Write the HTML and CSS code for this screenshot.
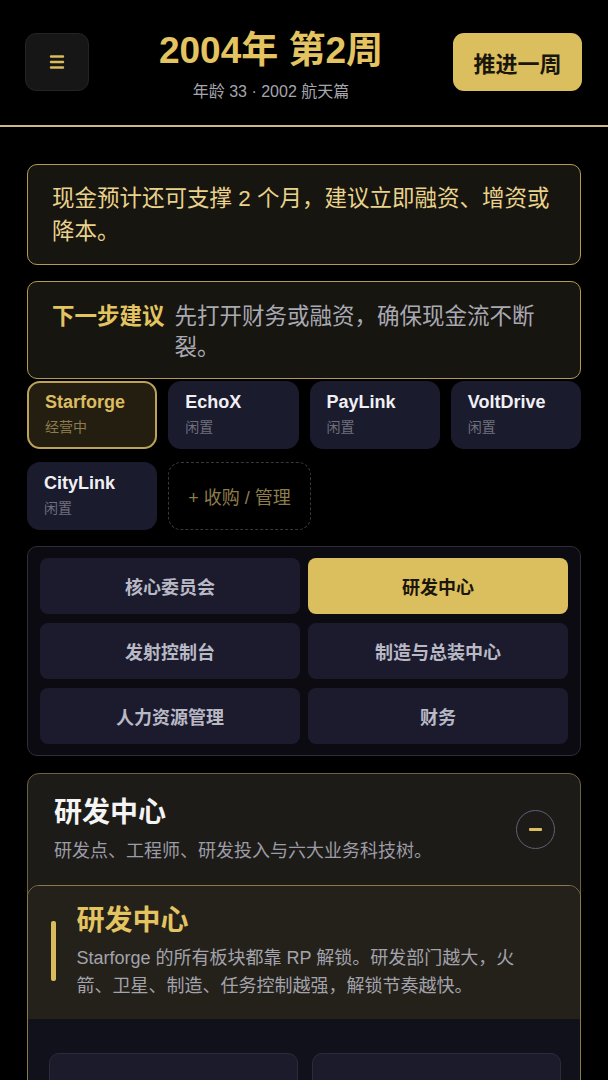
FILE: index.html
```html
<!DOCTYPE html>
<html lang="zh-CN">
<head>
<meta charset="utf-8">
<link rel="stylesheet" href="styles.css">
</head>
<body>
<div class="page">
  <header class="topbar">
    <button class="menu-btn" aria-label="菜单">
      <svg width="16" height="16" viewBox="0 0 16 16"><path d="M2 2.5h12M2 8h12M2 13.5h12" stroke="#d9bc5c" stroke-width="2.4" stroke-linecap="round"/></svg>
    </button>
    <div class="title-block">
      <div class="title">2004年 第2周</div>
      <div class="subtitle">年龄 33 · 2002 航天篇</div>
    </div>
    <button class="advance-btn">推进一周</button>
  </header>

  <main class="content">
    <div class="alert">现金预计还可支撑 2 个月，建议立即融资、增资或降本。</div>

    <div class="alert next">
      <span class="next-label">下一步建议</span>
      <span class="next-text">先打开财务或融资，确保现金流不断裂。</span>
    </div>

    <div class="companies">
      <div class="chip active"><div class="chip-name">Starforge</div><div class="chip-status">经营中</div></div>
      <div class="chip"><div class="chip-name">EchoX</div><div class="chip-status">闲置</div></div>
      <div class="chip"><div class="chip-name">PayLink</div><div class="chip-status">闲置</div></div>
      <div class="chip"><div class="chip-name">VoltDrive</div><div class="chip-status">闲置</div></div>
      <div class="chip"><div class="chip-name">CityLink</div><div class="chip-status">闲置</div></div>
      <div class="chip add">+ 收购 / 管理</div>
    </div>

    <nav class="tabs">
      <div class="tab">核心委员会</div>
      <div class="tab active">研发中心</div>
      <div class="tab">发射控制台</div>
      <div class="tab">制造与总装中心</div>
      <div class="tab">人力资源管理</div>
      <div class="tab">财务</div>
    </nav>

    <section class="section">
      <div class="section-head">
        <div>
          <div class="section-title">研发中心</div>
          <div class="section-sub">研发点、工程师、研发投入与六大业务科技树。</div>
        </div>
        <button class="collapse-btn" aria-label="收起"><span></span></button>
      </div>
      <div class="inner">
        <div class="inner-intro">
          <div class="bar"></div>
          <div>
            <div class="inner-title">研发中心</div>
            <div class="inner-text">Starforge 的所有板块都靠 RP 解锁。研发部门越大，火箭、卫星、制造、任务控制越强，解锁节奏越快。</div>
          </div>
        </div>
        <div class="inner-body">
          <div class="stat-card"><div class="stat-label">研发点</div></div>
          <div class="stat-card"><div class="stat-label">工程师</div></div>
        </div>
      </div>
    </section>
  </main>
</div>
</body>
</html>
```
FILE: styles.css
```css
* { box-sizing: border-box; }
html, body { margin: 0; padding: 0; background: #000; }
body {
  font-family: "Liberation Sans", "Noto Sans CJK SC", sans-serif;
  color: #e8e8ee;
  height: 1080px;
  overflow: hidden;
}
.page { width: 608px; }

.topbar {
  height: 127px;
  padding: 33px 26px 0 25px;
  display: flex;
  align-items: flex-start;
  justify-content: space-between;
  border-bottom: 2px solid #cdb97e;
}
.menu-btn {
  width: 64px; height: 58px;
  border-radius: 11px;
  background: #161616;
  border: 1px solid #242424;
  display: flex; align-items: center; justify-content: center;
  padding: 0;
}
.title-block {
  text-align: center;
  display: flex; flex-direction: column; align-items: center;
  margin-top: -3px;
}
.title {
  font-size: 37px; font-weight: 700; color: #e3c460;
  line-height: 42px;
}
.subtitle { font-size: 16px; color: #a6a6ae; line-height: 20px; margin-top: 10px; }
.advance-btn {
  width: 129px; height: 58px;
  border: none; border-radius: 11px;
  background: #dbbe5e;
  color: #1a160c;
  font-family: "Liberation Sans", "Noto Sans CJK SC", sans-serif;
  font-size: 22px; font-weight: 700;
  padding: 0;
}

.content { padding: 37px 27px 0 27px; }

.alert {
  border: 1.5px solid #b09a55;
  background: #17150f;
  border-radius: 10px;
  padding: 17px 24px 16px;
  font-size: 22.5px;
  line-height: 33px;
  color: #e9d28c;
}
.alert.next {
  margin-top: 16px;
  display: flex;
  gap: 10px;
  padding: 19px 24px 15px;
  line-height: 31px;
}
.next-label { font-weight: 700; color: #e3c460; flex: none; }
.next-text { color: #a9a9b4; }

.companies {
  margin-top: 2px;
  display: flex;
  flex-wrap: wrap;
  gap: 13px 11px;
}
.chip {
  width: calc((100% - 33px) / 4);
  height: 68px;
  border-radius: 13px;
  background: #1b1b2e;
  padding: 10px 17px;
}
.chip-name { font-size: 18px; font-weight: 700; color: #f0f0f4; line-height: 22px; }
.chip-status { font-size: 14px; color: #6f6f7c; line-height: 22px; margin-top: 3px; }
.chip.active { background: #231e10; border: 2px solid #bba35a; padding: 8px 16px; }
.chip.active .chip-name { color: #dcbb62; }
.chip.active .chip-status { color: #8c7b4e; }
.chip.add {
  width: auto;
  background: transparent;
  border: 1.5px dashed #3a3934;
  display: flex; align-items: center; justify-content: center;
  font-size: 18px; color: #8e7d4c;
  padding: 0 19px;
}

.tabs {
  margin-top: 16px;
  border: 1px solid #2d2d3c;
  background: #0b0b11;
  border-radius: 10px;
  padding: 11px 12px 11px 12px;
  display: grid;
  grid-template-columns: 1fr 1fr;
  gap: 9px 8px;
}
.tab {
  height: 56px;
  border-radius: 8px;
  background: #1b1b2d;
  display: flex; align-items: center; justify-content: center;
  font-size: 18px; font-weight: 700; color: #b9b9c6;
}
.tab.active { background: #dbbe5e; color: #1a160c; }

.section {
  margin-top: 17px;
  border: 1.5px solid #6d6142;
  border-radius: 12px;
  background: #1d1b17;
}
.section-head {
  display: flex; align-items: center; justify-content: space-between;
  padding: 0 26px 0 26px;
  height: 110.5px;
}
.section-title { font-size: 28px; font-weight: 700; color: #f4f4f4; line-height: 36px; }
.section-sub { font-size: 18px; color: #9c9ca6; line-height: 26px; margin-top: 7px; }
.collapse-btn {
  width: 39px; height: 39px;
  border-radius: 50%;
  border: 1.5px solid #5b6274;
  background: transparent;
  display: flex; align-items: center; justify-content: center;
  padding: 0;
  margin-right: -1px;
}
.collapse-btn span { width: 13px; height: 2.5px; background: #dbbe5e; border-radius: 1px; }

.inner {
  border: 1.5px solid #8a7a48;
  border-radius: 12px;
  overflow: hidden;
  margin: 0 -1px;
}
.inner-intro {
  background: #24211b;
  display: flex;
  align-items: flex-start;
  gap: 21px;
  padding: 16.5px 40px 19px 22.5px;
}
.bar { width: 5px; height: 60px; background: #d9bc5c; border-radius: 2px; margin-top: 19px; flex: none; }
.inner-title { font-size: 28px; font-weight: 700; color: #e3c460; line-height: 38px; }
.inner-text { font-size: 18px; color: #a3a3ab; line-height: 28px; margin-top: 4px; }
.inner-body {
  background: #11111b;
  padding: 34px 19.5px 20px 20.5px;
  display: grid;
  grid-template-columns: 1fr 1fr;
  gap: 14px;
}
.stat-card {
  height: 110px;
  border-radius: 10px;
  background: #1b1b2c;
  border: 1px solid #2b2b3b;
  padding: 16px 18px;
}
.stat-label { font-size: 15px; color: #9c9ca6; margin-top: 6px; }
```
